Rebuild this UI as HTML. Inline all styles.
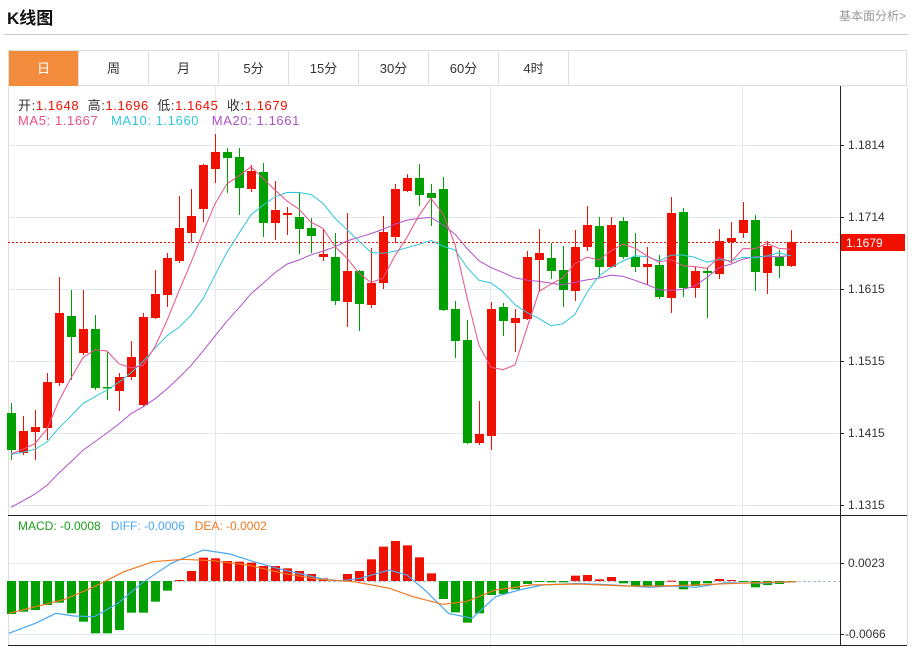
<!DOCTYPE html>
<html><head><meta charset="utf-8">
<style>
body{margin:0;background:#fff;width:912px;height:649px;overflow:hidden;font-family:"Liberation Sans","Noto Sans CJK SC",sans-serif;position:relative}
.t{position:absolute;white-space:nowrap}
.tabs{position:absolute;left:8px;top:50px;width:899px;height:36px;border:1px solid #ddd;box-sizing:border-box}
.tab{position:absolute;top:0;width:70px;height:35px;line-height:35px;text-align:center;font-size:13px;color:#333;border-right:1px solid #ddd;box-sizing:border-box}
.tab.on{background:#f28c3c;color:#fff}
</style></head><body>
<div class="t" style="left:7px;top:4px;font-size:17px;font-weight:bold;color:#111">K线图</div>
<div class="t" style="right:6px;top:7px;font-size:12px;color:#999">基本面分析&gt;</div>
<div style="position:absolute;left:4px;top:34px;width:904px;height:1px;background:#ccc"></div>
<div class="tabs">
<div class="tab on" style="left:0">日</div>
<div class="tab" style="left:70px">周</div>
<div class="tab" style="left:140px">月</div>
<div class="tab" style="left:210px">5分</div>
<div class="tab" style="left:280px">15分</div>
<div class="tab" style="left:350px">30分</div>
<div class="tab" style="left:420px">60分</div>
<div class="tab" style="left:490px">4时</div>
</div>
<svg id="s" width="912" height="649" style="position:absolute;left:0;top:0">
<defs><clipPath id="cp"><rect x="8" y="86" width="832" height="429"/></clipPath></defs>
<g stroke="#e3e9f0" stroke-width="1">
<line x1="8" x2="840" y1="145.5" y2="145.5"/><line x1="8" x2="840" y1="217.5" y2="217.5"/>
<line x1="8" x2="840" y1="289.5" y2="289.5"/><line x1="8" x2="840" y1="361.5" y2="361.5"/>
<line x1="8" x2="840" y1="433.5" y2="433.5"/><line x1="8" x2="840" y1="505.5" y2="505.5"/>
<line x1="8" x2="840" y1="563.5" y2="563.5"/><line x1="8" x2="840" y1="634.5" y2="634.5"/>
<line x1="215.5" x2="215.5" y1="86" y2="645"/><line x1="490.5" x2="490.5" y1="86" y2="645"/><line x1="742.5" x2="742.5" y1="86" y2="645"/>
</g>
<line x1="8.5" x2="8.5" y1="86" y2="645" stroke="#ddd"/>
<line x1="907.5" x2="907.5" y1="86" y2="645" stroke="#ddd"/>
<line x1="840.5" x2="840.5" y1="86" y2="646" stroke="#222"/>
<line x1="8" x2="907" y1="515.5" y2="515.5" stroke="#222"/>
<line x1="8" x2="907" y1="645.5" y2="645.5" stroke="#222"/>
<g stroke="#222"><line x1="840" x2="844" y1="145.5" y2="145.5"/><line x1="840" x2="844" y1="217.5" y2="217.5"/><line x1="840" x2="844" y1="289.5" y2="289.5"/><line x1="840" x2="844" y1="361.5" y2="361.5"/><line x1="840" x2="844" y1="433.5" y2="433.5"/><line x1="840" x2="844" y1="505.5" y2="505.5"/><line x1="840" x2="844" y1="563.5" y2="563.5"/><line x1="840" x2="844" y1="634.5" y2="634.5"/></g>
<line x1="8" x2="840" y1="581.5" y2="581.5" stroke="#8ac" stroke-dasharray="3,2" stroke-width="0.8"/>
<line x1="8" x2="840" y1="242.5" y2="242.5" stroke="#f01000" stroke-dasharray="2,2"/>
<g id="c"></g>
<g id="m" clip-path="url(#cp)"></g>
<rect x="841" y="234" width="64" height="17" fill="#f01000"/>
<g font-size="12" fill="#333" font-family="Liberation Sans,sans-serif">
<text x="848" y="149">1.1814</text><text x="848" y="221">1.1714</text><text x="848" y="293">1.1615</text>
<text x="848" y="365">1.1515</text><text x="848" y="437">1.1415</text><text x="848" y="509">1.1315</text>
<text x="848" y="567">0.0023</text><text x="845" y="638">-0.0066</text>
<text x="846" y="247" fill="#fff">1.1679</text>
</g>
</svg>
<div class="t" style="left:18px;top:95px;font-size:13px;letter-spacing:0.6px;color:#333">开:<span style="color:#f01000">1.1648</span>&nbsp; 高:<span style="color:#f01000">1.1696</span>&nbsp; 低:<span style="color:#f01000">1.1645</span>&nbsp; 收:<span style="color:#f01000">1.1679</span></div>
<div class="t" style="left:18px;top:113px;font-size:13px;letter-spacing:0.6px"><span style="color:#e8508a">MA5: 1.1667</span>&nbsp;&nbsp; <span style="color:#2ec7d9">MA10: 1.1660</span>&nbsp;&nbsp; <span style="color:#b050c8">MA20: 1.1661</span></div>
<div class="t" style="left:18px;top:519px;font-size:12px"><span style="color:#1a9e1a">MACD: -0.0008</span>&nbsp;&nbsp; <span style="color:#4aa8f0">DIFF: -0.0006</span>&nbsp;&nbsp; <span style="color:#f07820">DEA: -0.0002</span></div>
<script>
var D=[["g",413,450,403,460],["r",431,453,416,455],["r",427,432,410,460],["r",382,428,373,440],["r",313,383,277,386],["g",316,337,290,380],["r",329,353,290,355],["g",329,388,315,390],["g",387,388,352,400],["r",377,391,373,411],["r",357,377,341,380],["r",317,405,313,407],["r",294,318,270,319],["r",258,295,253,307],["r",228,261,196,263],["r",216,233,189,242],["r",165,209,164,222],["r",152,169,134,183],["g",152,158,148,193],["g",157,188,148,215],["r",171,189,165,192],["g",172,223,163,237],["r",210,223,181,240],["r",213,215,207,235],["g",217,229,192,254],["g",228,236,218,253],["r",254,257,229,261],["g",257,301,233,305],["r",271,302,213,327],["g",271,304,270,331],["r",283,305,248,308],["r",232,283,216,289],["r",189,237,184,243],["r",178,191,174,192],["g",178,195,164,206],["g",193,198,184,226],["g",189,310,177,311],["g",309,341,301,358],["g",340,443,320,444],["r",434,443,401,445],["r",309,436,302,450],["g",307,321,303,336],["r",318,323,309,352],["r",257,319,251,320],["r",253,260,229,292],["g",258,271,243,279],["g",270,290,246,307],["r",247,291,230,301],["r",225,247,206,251],["g",226,267,217,277],["r",225,267,217,268],["g",221,257,217,259],["g",257,267,233,272],["r",264,267,247,285],["g",265,297,255,299],["r",213,298,197,313],["g",212,288,208,297],["r",271,288,267,298],["g",271,273,267,318],["r",241,274,229,279],["r",238,242,222,263],["r",220,233,202,238],["g",220,272,215,291],["r",246,273,241,294],["g",257,266,250,278],["r",242,266,230,267]];
var H=[342,335,330,315,308,340,365,400,400,390,338,338,305,272,240,213,173,175,183,185,188,198,198,205,213,222,235,240,222,213,178,140,123,136,172,220,297,337,368,340,285,282,268,252,245,247,247,227,225,238,231,250,258,258,258,242,268,258,250,237,240,243,262,255,252,243];
var NS="http://www.w3.org/2000/svg",g=document.getElementById("c"),gm=document.getElementById("m");
function el(t,a,p){var e=document.createElementNS(NS,t);for(var k in a)e.setAttribute(k,a[k]);(p||g).appendChild(e);return e}
var R="#f01000",G="#00a000",cl=[];
D.forEach(function(d,i){var x=11+12*i,c=d[0]=="r"?R:G;
el("line",{x1:x+.5,x2:x+.5,y1:d[3],y2:d[4],stroke:c,"stroke-width":1});
el("rect",{x:x-4,y:d[1],width:9,height:Math.max(1.5,d[2]-d[1]),fill:c});
cl.push(d[0]=="r"?d[1]:d[2]);
var h=500+H[i]/3,z=581;el("rect",{x:x-4,y:Math.min(h,z),width:9,height:Math.max(1,Math.abs(h-z)),fill:H[i]<243?R:G});});
var pad=[];for(var k=0;k<19;k++)pad.push(k<10?560:455);var all=pad.concat(cl);
function ma(n,col){var p=[];for(var i=0;i<D.length;i++){var s=0;for(var j=0;j<n;j++)s+=all[19+i-j];p.push((11+12*i)+","+(s/n).toFixed(1));}
el("polyline",{points:p.join(" "),fill:"none",stroke:col,"stroke-width":1},gm);}
ma(20,"#b050c8");ma(10,"#2ec7d9");ma(5,"#e8508a");
function ln(a,col){el("polyline",{points:a.map(function(p){return (p[0]*0.59).toFixed(1)+","+(500+p[1]/3).toFixed(1)}).join(" "),fill:"none",stroke:col,"stroke-width":1.2})}
ln([[15,400],[60,370],[95,340],[125,348],[160,350],[200,310],[240,250],[290,190],[345,150],[390,162],[430,185],[470,205],[510,222],[550,238],[580,242],[610,235],[660,210],[690,225],[720,270],[760,340],[800,355],[840,290],[880,270],[920,255],[980,250],[1040,255],[1100,262],[1140,258],[1180,262],[1230,248],[1290,250],[1350,245]],"#4aa8f0");
ln([[15,340],[60,320],[110,298],[160,260],[210,215],[260,185],[310,178],[360,182],[420,195],[480,220],[540,238],[600,245],[660,265],[700,290],[750,313],[790,305],[840,270],[900,255],[980,252],[1060,258],[1120,258],[1180,255],[1250,250],[1350,245]],"#f07820");
</script>
</body></html>
